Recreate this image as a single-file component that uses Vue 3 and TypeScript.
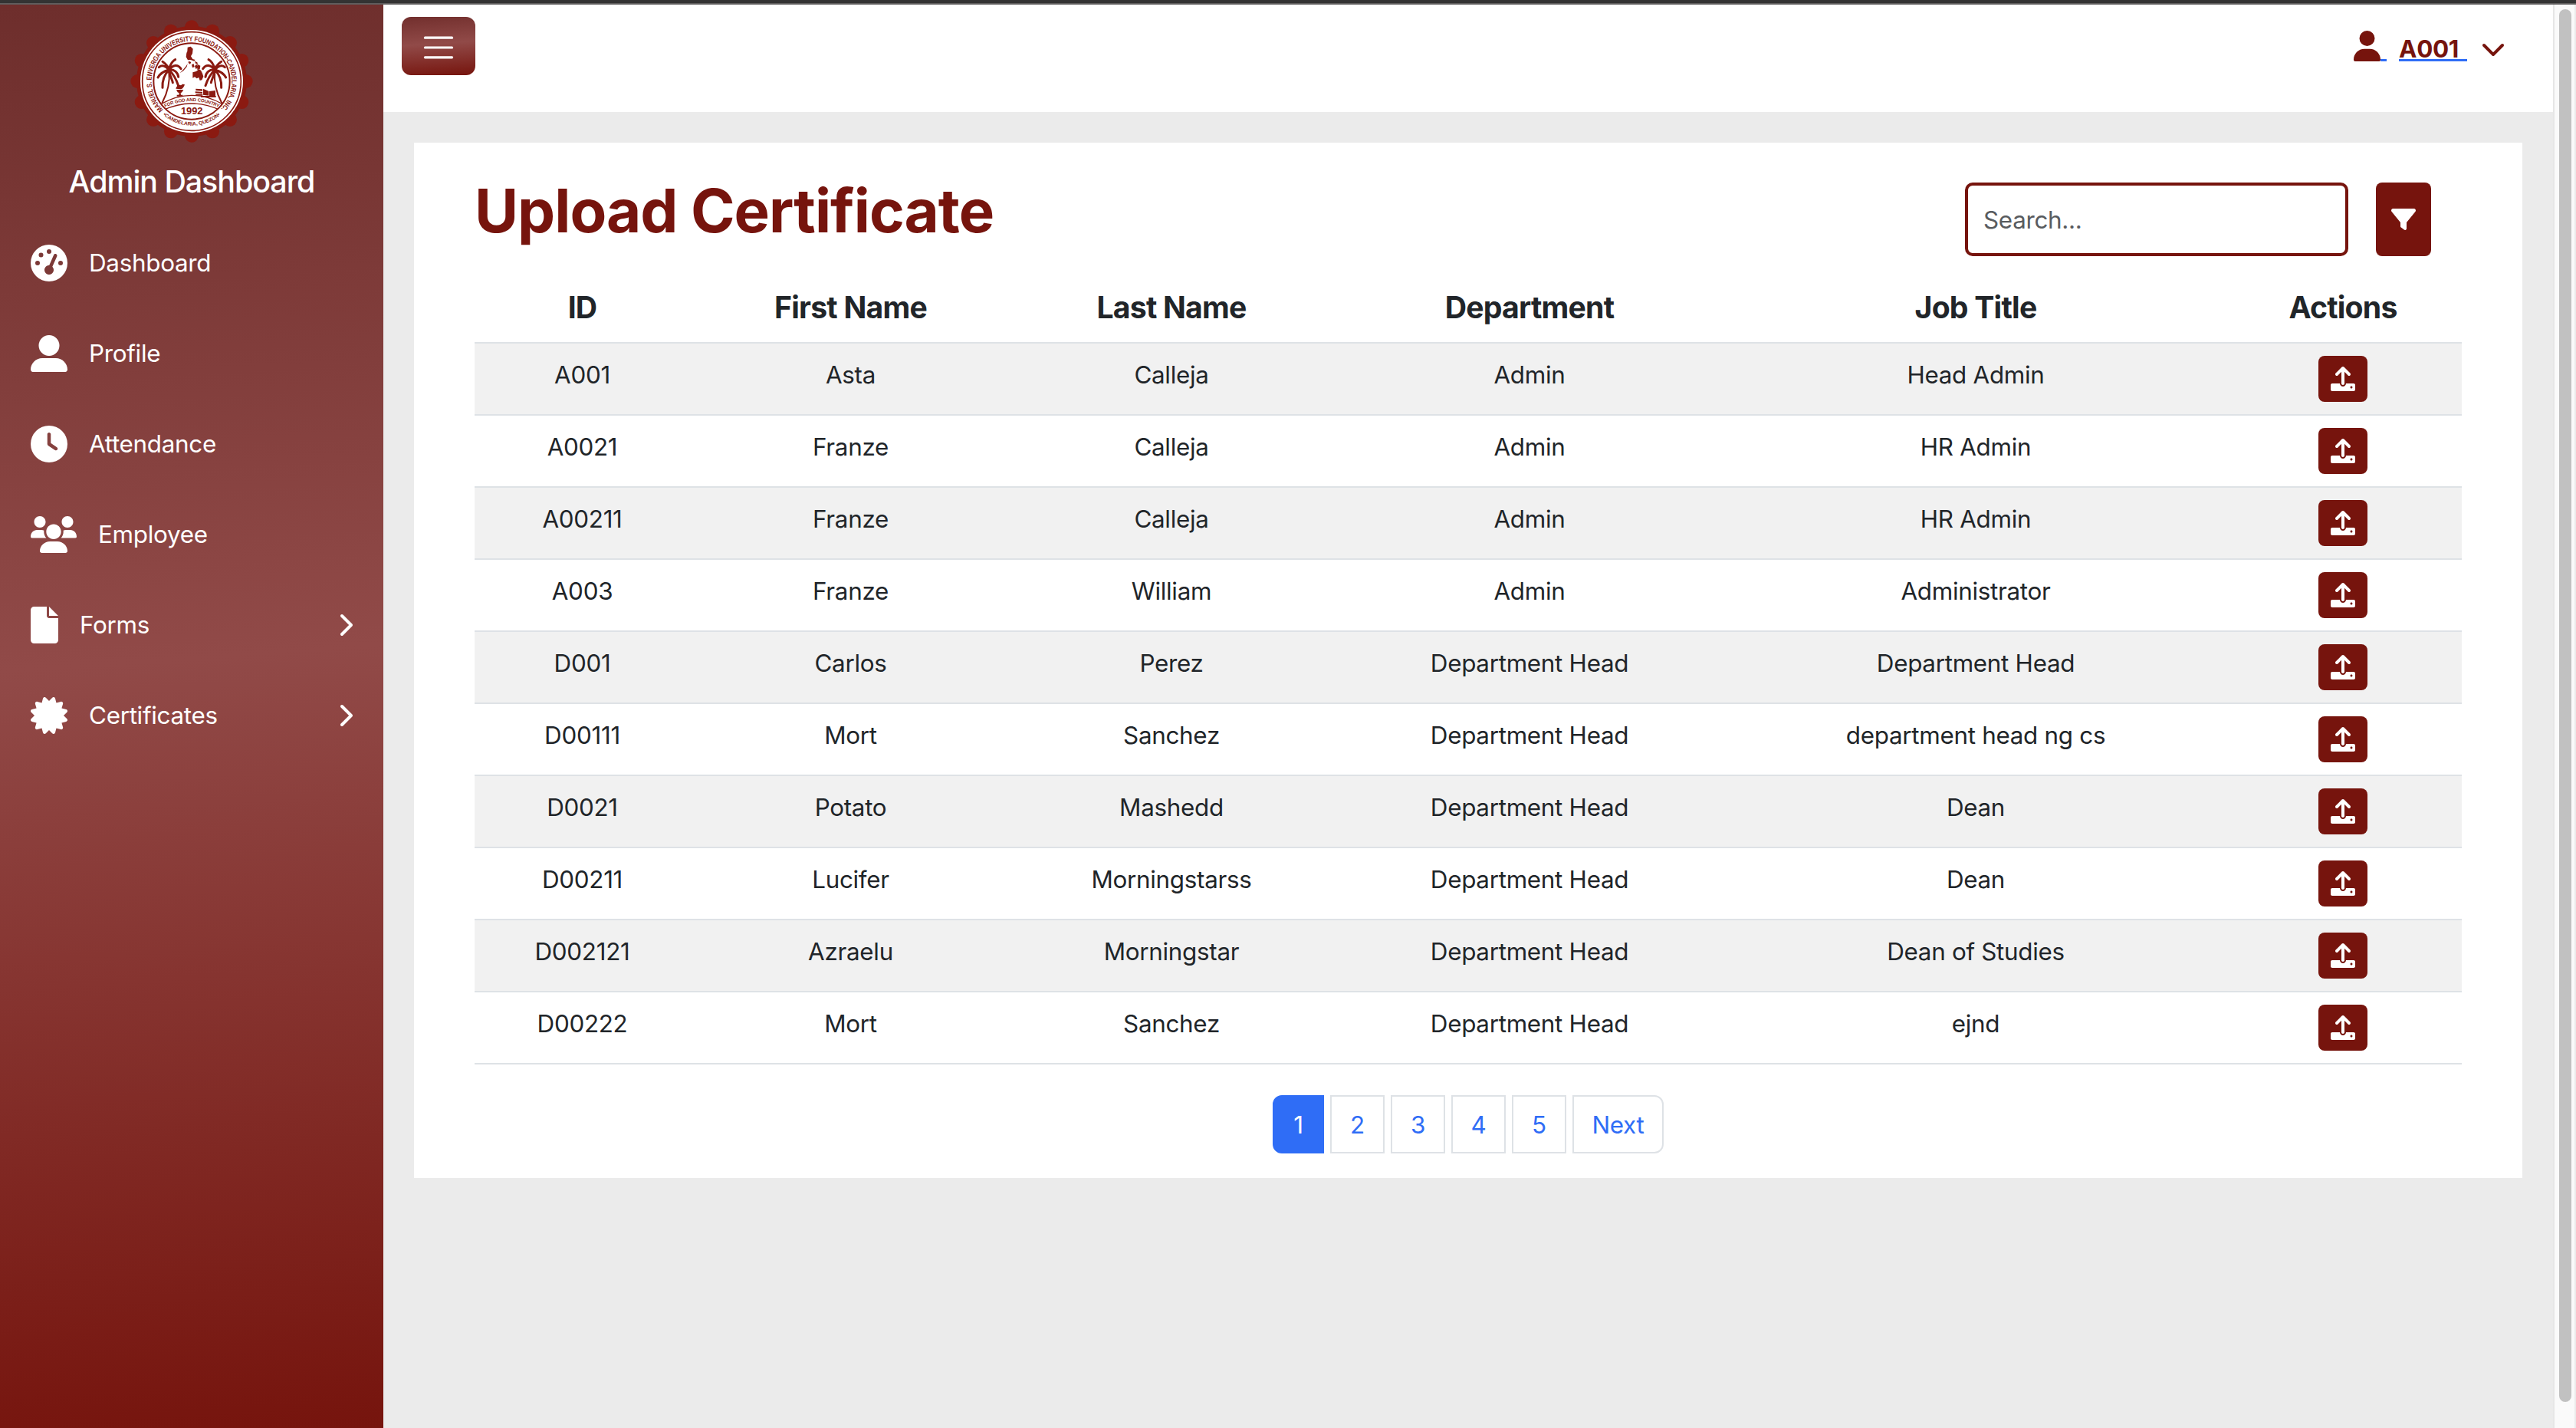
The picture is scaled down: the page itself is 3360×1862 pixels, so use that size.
<script setup lang="ts">
interface NavItem {
  label: string
  viewBox: string
  width: number
  path: string
  expandable?: boolean
}

interface Employee {
  id: string
  first: string
  last: string
  department: string
  job: string
}

const navItems: NavItem[] = [
  {
    label: 'Dashboard',
    viewBox: '0 0 512 512',
    width: 48,
    path: 'M0 256a256 256 0 1 1 512 0A256 256 0 1 1 0 256zM288 96a32 32 0 1 0 -64 0 32 32 0 1 0 64 0zM256 416c35.3 0 64-28.7 64-64c0-17.4-6.9-33.1-18.1-44.6L366 161.7c5.3-12.1-.2-26.3-12.3-31.6s-26.3 .2-31.6 12.3L257.9 288c-.6 0-1.3 0-1.9 0c-35.3 0-64 28.7-64 64s28.7 64 64 64zM176 144a32 32 0 1 0 -64 0 32 32 0 1 0 64 0zM96 288a32 32 0 1 0 0-64 32 32 0 1 0 0 64zm352-32a32 32 0 1 0 -64 0 32 32 0 1 0 64 0z',
  },
  {
    label: 'Profile',
    viewBox: '0 0 512 512',
    width: 48,
    path: 'M256 288A144 144 0 1 0 256 0a144 144 0 1 0 0 288zm-94.7 32C72.2 320 0 392.2 0 481.3c0 17 13.8 30.7 30.7 30.7H481.3c17 0 30.7-13.8 30.7-30.7C512 392.2 439.8 320 350.7 320H161.3z',
  },
  {
    label: 'Attendance',
    viewBox: '0 0 512 512',
    width: 48,
    path: 'M256 0a256 256 0 1 1 0 512A256 256 0 1 1 256 0zM232 120V256c0 8 4 15.5 10.7 20l96 64c11 7.4 25.9 4.4 33.3-6.7s4.4-25.9-6.7-33.3L280 243.2V120c0-13.3-10.7-24-24-24s-24 10.7-24 24z',
  },
  {
    label: 'Employee',
    viewBox: '0 0 640 512',
    width: 60,
    path: 'M319.9 320c57.41 0 103.1-46.56 103.1-104c0-57.44-46.54-104-103.1-104c-57.41 0-103.1 46.56-103.1 104C215.9 273.4 262.5 320 319.9 320zM369.9 352H270.1C191.6 352 128 411.7 128 485.3C128 500.1 140.7 512 156.4 512h327.2C499.3 512 512 500.1 512 485.3C512 411.7 448.4 352 369.9 352zM512 160c44.18 0 80-35.82 80-80S556.2 0 512 0c-44.18 0-80 35.82-80 80S467.8 160 512 160zM183.9 216c0-5.449 .9824-10.63 1.609-15.91C174.6 194.1 162.6 192 149.9 192H88.08C39.44 192 0 233.8 0 285.3C0 295.6 7.887 304 17.62 304h199.5C196.7 280.2 183.9 249.7 183.9 216zM128 160c44.18 0 80-35.82 80-80S172.2 0 128 0C83.82 0 48 35.82 48 80S83.82 160 128 160zM551.9 192h-61.84c-12.8 0-24.88 3.037-35.86 8.24C454.8 205.5 455.8 210.6 455.8 216c0 33.71-12.78 64.21-33.16 88h199.7C632.1 304 640 295.6 640 285.3C640 233.8 600.6 192 551.9 192z',
  },
  {
    label: 'Forms',
    viewBox: '0 0 384 512',
    width: 36,
    path: 'M0 48C0 21.49 21.49 0 48 0H224V128C224 145.7 238.3 160 256 160H384V464C384 490.5 362.5 512 336 512H48C21.49 512 0 490.5 0 464V48zM256 128V0L384 128H256z',
    expandable: true,
  },
  {
    label: 'Certificates',
    viewBox: '0 0 512 512',
    width: 48,
    path: 'M458.622 255.92l45.985-45.005c13.708-12.977 7.316-36.039-10.664-40.339l-62.65-15.99 17.661-62.015c4.991-17.838-11.829-34.663-29.661-29.671l-61.994 17.667-15.984-62.671C337.085.197 313.765-6.276 300.99 7.228L256 53.57 211.011 7.229c-12.63-13.351-36.047-7.234-40.325 10.668l-15.984 62.671-61.995-17.667C74.87 57.907 58.056 74.738 63.046 92.572l17.661 62.015-62.65 15.99C.069 174.878-6.31 197.944 7.392 210.915l45.985 45.005-45.985 45.004c-13.708 12.977-7.316 36.039 10.664 40.339l62.65 15.99-17.661 62.015c-4.991 17.838 11.829 34.663 29.661 29.671l61.994-17.667 15.984 62.671c4.439 18.575 27.696 24.018 40.325 10.668L256 458.61l44.989 46.001c12.5 13.488 35.987 7.486 40.325-10.668l15.984-62.671 61.994 17.667c17.836 4.994 34.651-11.837 29.661-29.671l-17.661-62.015 62.65-15.99c17.987-4.302 24.366-27.367 10.664-40.339l-45.984-45.004z',
    expandable: true,
  },
]

const columns: string[] = ['ID', 'First Name', 'Last Name', 'Department', 'Job Title', 'Actions']

const employees: Employee[] = [
  { id: 'A001', first: 'Asta', last: 'Calleja', department: 'Admin', job: 'Head Admin' },
  { id: 'A0021', first: 'Franze', last: 'Calleja', department: 'Admin', job: 'HR Admin' },
  { id: 'A00211', first: 'Franze', last: 'Calleja', department: 'Admin', job: 'HR Admin' },
  { id: 'A003', first: 'Franze', last: 'William', department: 'Admin', job: 'Administrator' },
  { id: 'D001', first: 'Carlos', last: 'Perez', department: 'Department Head', job: 'Department Head' },
  { id: 'D00111', first: 'Mort', last: 'Sanchez', department: 'Department Head', job: 'department head ng cs' },
  { id: 'D0021', first: 'Potato', last: 'Mashedd', department: 'Department Head', job: 'Dean' },
  { id: 'D00211', first: 'Lucifer', last: 'Morningstarss', department: 'Department Head', job: 'Dean' },
  { id: 'D002121', first: 'Azraelu', last: 'Morningstar', department: 'Department Head', job: 'Dean of Studies' },
  { id: 'D00222', first: 'Mort', last: 'Sanchez', department: 'Department Head', job: 'ejnd' },
]

const pages: string[] = ['1', '2', '3', '4', '5', 'Next']

const scallops: { x: number; y: number }[] = Array.from({ length: 16 }, (_, i) => {
  const a = (i * Math.PI) / 8
  return { x: 300 + 212 * Math.sin(a), y: 317 - 212 * Math.cos(a) }
})

const fronds =
  'M211 272C198 256 184 252 172 262M211 272C204 250 194 246 186 240M211 272C216 250 224 238 236 232M211 272C228 252 246 250 258 268M211 272C232 268 246 284 248 300M211 272C226 286 240 310 248 334M211 272C196 276 178 284 168 302M211 272C196 288 184 310 186 342M211 272C212 290 224 310 226 322'
</script>

<template>
  <div class="window">
    <div class="window-edge"></div>
    <div class="app">
      <aside class="sidebar">
        <svg class="logo" viewBox="60 77 480 480">
          <defs>
            <path id="seal-top" d="M189 428A157 157 0 1 1 411 428" />
            <path id="seal-bottom" d="M184.7 446A173 173 0 0 0 415.3 446" />
            <path id="seal-motto" d="M193 420Q300 370 407 420" />
            <clipPath id="seal-clip"><circle cx="300" cy="317" r="149" /></clipPath>
          </defs>
          <g fill="#8b1a11">
            <circle cx="300" cy="317" r="216" />
            <circle v-for="(s, i) in scallops" :key="i" :cx="s.x" :cy="s.y" r="27" />
          </g>
          <circle cx="300" cy="317" r="201" fill="#fff" />
          <circle cx="300" cy="317" r="193" fill="none" stroke="#8b1a11" stroke-width="5" />
          <circle cx="300" cy="317" r="149" fill="#fff" stroke="#8b1a11" stroke-width="6" />
          <g fill="#8b1a11" font-family="Liberation Sans, Arial, sans-serif" font-weight="700">
            <text font-size="28">
              <textPath href="#seal-top" textLength="734" lengthAdjust="spacingAndGlyphs">MANUEL S. ENVERGA UNIVERSITY FOUNDATION-CANDELARIA, INC.</textPath>
            </text>
            <text font-size="20">
              <textPath href="#seal-bottom" startOffset="4" textLength="244" lengthAdjust="spacingAndGlyphs">•CANDELARIA, QUEZON•</textPath>
            </text>
            <text font-size="18">
              <textPath href="#seal-motto" startOffset="3" textLength="217" lengthAdjust="spacingAndGlyphs">FOR GOD AND COUNTRY</textPath>
            </text>
            <text x="258" y="447" font-size="41" textLength="85" lengthAdjust="spacingAndGlyphs">1992</text>
          </g>
          <g clip-path="url(#seal-clip)" fill="none" stroke="#8b1a11" stroke-width="4">
            <path d="M180 406Q300 338 420 406" />
            <path d="M188 430Q300 378 412 430" />
          </g>
          <g fill="none" stroke="#8b1a11" stroke-linecap="round">
            <path d="M211 276C216 318 206 360 185 400" stroke-width="6" />
            <path :d="fronds" stroke-width="9" />
          </g>
          <g fill="none" stroke="#8b1a11" stroke-linecap="round" transform="translate(602 0) scale(-1 1)">
            <path d="M211 276C216 318 206 360 185 400" stroke-width="6" />
            <path :d="fronds" stroke-width="9" />
          </g>
          <g fill="#8b1a11">
            <path d="M284 184L296 181L305 190L303 208L297 219L304 230L314 233L310 238L296 233L285 234L278 222L280 206L283 200Z" />
            <path d="M288 238l10 4l-4 8l-7-5zM312 238l10 5l2 8l-9-4zM300 252l8-3l3 12l-8 3zM312 258l7-8l5 12l-7 8zM322 250l12 6l-2 14l-10 2zM284 248l-6 10l-12 14l-12 13l14-9l13-16z" />
            <path d="M304 282l14-4l10-8l8 4l6 12l4 12l-6 14l-8 2l-4-12l-8 4l-8-6l-8 4z" />
            <path d="M240 350H268L262 360L257 363L258 370H265V376H242V370H250L251 363L245 360ZM238 346C240 336 248 330 258 333C262 327 268 327 273 330C270 338 266 346 258 348Z" />
            <path d="M316 346l26 2v7l-26-2zM314 357l28 2v6l-28-2zM316 367h27v6h-27zM345 346l22 10v17l-22-3zM369 356l24-3v22l-24-1z" />
            <path d="M336 374H395V380H336Z" />
          </g>
        </svg>
        <h2 class="brand">Admin Dashboard</h2>
        <nav class="nav">
          <a v-for="item in navItems" :key="item.label" class="nav-item">
            <svg :viewBox="item.viewBox" :width="item.width" height="48" fill="#fff"><path :d="item.path" /></svg>
            <span class="nav-label">{{ item.label }}</span>
            <svg v-if="item.expandable" class="nav-chevron" viewBox="0 0 320 512" width="20" height="32" fill="#fff">
              <path d="M310.6 233.4c12.5 12.5 12.5 32.8 0 45.3l-192 192c-12.5 12.5-32.8 12.5-45.3 0s-12.5-32.8 0-45.3L242.7 256 73.4 86.6c-12.5-12.5-12.5-32.8 0-45.3s32.8-12.5 45.3 0l192 192z" />
            </svg>
          </a>
        </nav>
      </aside>

      <main class="main">
        <header class="topbar">
          <button class="toggler" type="button">
            <svg viewBox="0 0 30 30" width="48" height="48" fill="none" stroke="#fff" stroke-width="2" stroke-linecap="round">
              <path d="M4 7h22M4 15h22M4 23h22" />
            </svg>
          </button>
          <div class="user">
            <svg class="user-icon" viewBox="0 0 448 512" width="35" height="40" fill="#76140d">
              <path d="M224 256A128 128 0 1 0 224 0a128 128 0 1 0 0 256zm-45.7 48C79.8 304 0 383.8 0 482.3C0 498.7 13.3 512 29.7 512H418.3c16.4 0 29.7-13.3 29.7-29.7C448 383.8 368.2 304 269.7 304H178.3z" />
            </svg>
            <span class="user-gap"></span>
            <span class="user-name">A001</span>
            <svg class="user-chevron" viewBox="0 0 512 512" width="32" height="32" fill="#76140d">
              <path d="M233.4 406.6c12.5 12.5 32.8 12.5 45.3 0l192-192c12.5-12.5 12.5-32.8 0-45.3s-32.8-12.5-45.3 0L256 338.7 86.6 169.4c-12.5-12.5-32.8-12.5-45.3 0s-12.5 32.8 0 45.3l192 192z" />
            </svg>
          </div>
        </header>

        <section class="card">
          <div class="card-head">
            <h1 class="title">Upload Certificate</h1>
            <div class="tools">
              <input class="search" type="text" placeholder="Search..." />
              <button class="filter" type="button">
                <svg viewBox="0 0 512 512" width="32" height="32" fill="#fff">
                  <path d="M3.9 54.9C10.5 40.9 24.5 32 40 32H472c15.5 0 29.5 8.9 36.1 22.9s4.6 30.5-5.2 42.5L320 320.9V448c0 12.1-6.8 23.2-17.7 28.6s-23.8 4.3-33.5-3l-64-48c-8.1-6-12.8-15.5-12.8-25.6V320.9L9 97.3C-.7 85.4-2.8 68.8 3.9 54.9z" />
                </svg>
              </button>
            </div>
          </div>

          <div class="table">
            <div class="row row-head">
              <div v-for="c in columns" :key="c" class="cell"><span>{{ c }}</span></div>
            </div>
            <div v-for="e in employees" :key="e.id" class="row row-body">
              <div class="cell">{{ e.id }}</div>
              <div class="cell">{{ e.first }}</div>
              <div class="cell">{{ e.last }}</div>
              <div class="cell">{{ e.department }}</div>
              <div class="cell">{{ e.job }}</div>
              <div class="cell cell-action">
                <button class="upload" type="button">
                  <svg viewBox="0 0 512 512" width="32" height="32" fill="#fff">
                    <path d="M105.4 182.6c12.5 12.49 32.76 12.5 45.25 .001L224 109.3V352c0 17.67 14.33 32 32 32c17.67 0 32-14.33 32-32V109.3l73.38 73.38c12.49 12.49 32.75 12.49 45.25-.001c12.49-12.49 12.49-32.75 0-45.25l-128-128C272.4 3.125 264.2 0 256 0S239.6 3.125 233.4 9.375L105.4 137.4C92.88 149.9 92.88 170.1 105.4 182.6zM480 352h-160c0 35.35-28.65 64-64 64s-64-28.65-64-64H32c-17.67 0-32 14.33-32 32v96c0 17.67 14.33 32 32 32h448c17.67 0 32-14.33 32-32v-96C512 366.3 497.7 352 480 352zM432 456c-13.2 0-24-10.8-24-24c0-13.2 10.8-24 24-24s24 10.8 24 24C456 445.2 445.2 456 432 456z" />
                  </svg>
                </button>
              </div>
            </div>
          </div>

          <div class="pagination">
            <a v-for="(p, i) in pages" :key="p" class="page" :class="{ active: i === 0, next: p === 'Next' }">{{ p }}</a>
          </div>
        </section>
      </main>

      <div class="scrollbar"><div class="thumb"></div></div>
    </div>
  </div>
</template>

<style>
body {
  margin: 0;
  overflow: hidden;
}
</style>

<style scoped>
.window {
  width: 3360px;
  height: 1862px;
  overflow: hidden;
  display: flex;
  flex-direction: column;
  background: #ebebeb;
  color: #212529;
  font-family: Inter, 'Liberation Sans', sans-serif;
  font-size: 31.4px;
  letter-spacing: -0.3px;
}
.window * {
  box-sizing: border-box;
}
.window-edge {
  height: 6px;
  flex: none;
  background: #333;
  border-bottom: 2px solid #5f5d5d;
}
.app {
  flex: 1;
  display: flex;
  min-height: 0;
}
.sidebar {
  width: 500px;
  flex: none;
  display: flex;
  flex-direction: column;
  color: #fff;
  background: linear-gradient(176deg, #6e2e2c 0%, #914a48 46%, #76140d 100%);
}
.logo {
  width: 160px;
  height: 160px;
  margin: 20px auto 0;
  flex: none;
}
.brand {
  margin: 21px 0 0;
  height: 60px;
  line-height: 60px;
  text-align: center;
  font-size: 39.4px;
  font-weight: 500;
  letter-spacing: -1.05px;
}
.nav {
  display: flex;
  flex-direction: column;
  margin-top: 17px;
}
.nav-item {
  height: 118px;
  padding: 0 40px;
  display: flex;
  align-items: center;
}
.nav-label {
  margin-left: 28px;
  line-height: 48px;
}
.nav-chevron {
  margin-left: auto;
}
.main {
  flex: 1;
  min-width: 0;
  display: flex;
  flex-direction: column;
}
.topbar {
  height: 140px;
  flex: none;
  display: flex;
  justify-content: space-between;
  align-items: flex-start;
  background: #fff;
  padding: 16px 62px 0 24px;
}
button {
  border: 0;
  padding: 0;
  display: flex;
  align-items: center;
  justify-content: center;
}
.toggler {
  width: 96px;
  height: 76px;
  border-radius: 12px;
  background: linear-gradient(176deg, #722f2d 0%, #914a48 46%, #76140d 100%);
  padding-top: 4px;
}
.user {
  display: flex;
  align-items: flex-start;
  padding-top: 18px;
}
.user-icon {
  flex: none;
}
.user-gap {
  width: 8px;
  height: 3px;
  margin: 37px 16px 0 0;
  background: #2f6df6;
}
.user-name {
  width: 89px;
  height: 40px;
  line-height: 48px;
  border-bottom: 3px solid #2f6df6;
  color: #76140d;
  font-weight: 700;
  white-space: nowrap;
}
.user-chevron {
  margin: 7px 0 0 18px;
}
.card {
  margin: 40px 40px 0;
  height: 1350px;
  padding: 52px 80px 0;
  background: #fff;
  display: flex;
  flex-direction: column;
}
.card-head {
  display: flex;
  justify-content: space-between;
  height: 112px;
}
.title {
  margin: -11px 0 0 -1px;
  line-height: 96px;
  font-size: 78px;
  font-weight: 700;
  color: #76140d;
  letter-spacing: -1px;
}
.tools {
  display: flex;
  gap: 36px;
  padding-right: 39px;
}
.search {
  width: 500px;
  height: 96px;
  border: 4px solid #76140d;
  border-radius: 10px;
  padding: 1px 20px 0;
  background: #fff;
  outline: none;
  font: inherit;
  letter-spacing: inherit;
  color: #212529;
}
.search::placeholder {
  color: #595c5f;
  opacity: 1;
}
.filter {
  width: 72px;
  height: 96px;
  border-radius: 8px;
  background: #76140d;
}
.row {
  display: grid;
  grid-template-columns: 281px 419px 418px 516px 648px 310px;
  margin: 0 -1px;
  border-bottom: 2px solid #dee2e6;
  text-align: center;
}
.row-head {
  height: 98px;
  font-size: 39.2px;
  font-weight: 700;
  line-height: 102px;
  letter-spacing: -0.8px;
}
.row-body {
  height: 94px;
  line-height: 82px;
}
.row-body:nth-child(even) {
  background: #f1f1f1;
}
.cell-action {
  display: flex;
  justify-content: center;
  padding-top: 16px;
}
.upload {
  width: 64px;
  height: 60px;
  border-radius: 8px;
  background: #76140d;
}
.pagination {
  display: flex;
  justify-content: center;
  gap: 8px;
  margin-top: 40px;
}
.page {
  width: 71px;
  height: 76px;
  border: 2px solid #dee2e6;
  line-height: 74px;
  text-align: center;
  color: #2f6df6;
}
.page.active {
  width: 67px;
  background: #2f6df6;
  border-color: #2f6df6;
  color: #fff;
  border-radius: 12px 0 0 12px;
}
.page.next {
  width: 119px;
  border-radius: 0 12px 12px 0;
}
.scrollbar {
  width: 30px;
  flex: none;
  background: #fafafa;
  border-left: 2px solid #e6e6e6;
  border-right: 2px solid #ebebeb;
  padding: 6px 0 0 6px;
}
.thumb {
  width: 16px;
  height: 1816px;
  border-radius: 8px;
  background: #c1c1c1;
}
</style>
